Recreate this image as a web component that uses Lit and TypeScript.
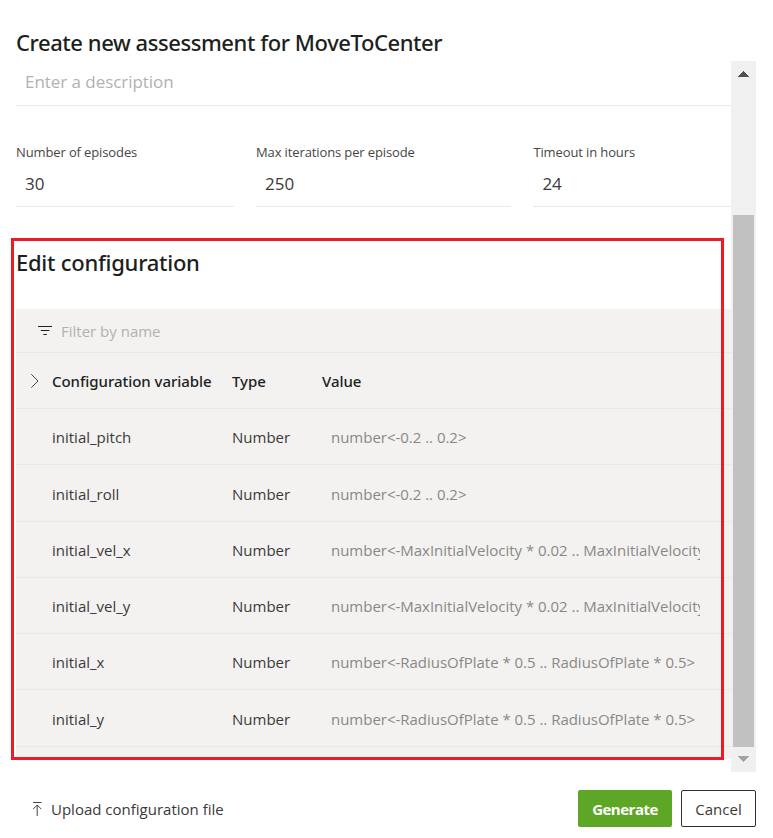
import { LitElement, html, css, svg } from "lit";
import { customElement } from "lit/decorators.js";

const PITCH = "number<-0.2 .. 0.2>";
const VELOCITY = "number<-MaxInitialVelocity * 0.02 .. MaxInitialVelocity * 0.02>";
const RADIUS = "number<-RadiusOfPlate * 0.5 .. RadiusOfPlate * 0.5>";

const ROWS: [string, string, string][] = [
  ["initial_pitch", "Number", PITCH],
  ["initial_roll", "Number", PITCH],
  ["initial_vel_x", "Number", VELOCITY],
  ["initial_vel_y", "Number", VELOCITY],
  ["initial_x", "Number", RADIUS],
  ["initial_y", "Number", RADIUS],
];

const FIELDS: [string, string][] = [
  ["Number of episodes", "30"],
  ["Max iterations per episode", "250"],
  ["Timeout in hours", "24"],
];

@customElement("config-table")
export class ConfigTable extends LitElement {
  static styles = css`
    :host {
      display: block;
      background: #f3f2f1;
      font-size: 15px;
      color: #3b3a39;
      height: 450px;
      overflow: hidden;
    }
    .filter,
    .row {
      box-sizing: border-box;
      border-bottom: 1px solid #eae9e8;
      align-items: center;
    }
    .filter {
      display: flex;
      height: 44px;
      padding-left: 21px;
      gap: 8px;
      color: #b3b1af;
      line-height: 20px;
      padding-top: 1px;
    }
    .row {
      display: grid;
      grid-template-columns: 36px 180px 90px 378px;
      height: 56.25px;
      line-height: 20px;
      padding-top: 1.6px;
    }
    .head {
      height: 56px;
      padding-top: 0;
      font-family: "Noto Sans", sans-serif;
      font-weight: 500;
      letter-spacing: -0.04px;
      color: #201f1e;
    }
    .value {
      margin-left: 9px;
      color: #8a8886;
      letter-spacing: -0.02px;
      white-space: nowrap;
      overflow: hidden;
    }
    .chevron {
      margin-left: 14px;
    }
    svg {
      display: block;
    }
  `;

  render() {
    return html`
      <div class="filter">
        <svg width="16" height="16" viewBox="0 0 16 16" fill="none" stroke="#201f1e" stroke-width="1.2">
          <path d="M1 3.5h14M3.8 7.5h8.6M6.3 11.5h3.5" />
        </svg>
        <span>Filter by name</span>
      </div>
      <div class="row head">
        <svg class="chevron" width="10" height="16" viewBox="0 0 10 16" fill="none" stroke="#484644" stroke-width="1">
          <path d="M1.3 1.3L8 8l-6.7 6.7" />
        </svg>
        <span>Configuration variable</span><span>Type</span><span>Value</span>
      </div>
      ${ROWS.map(
        ([name, type, value]) => html`
          <div class="row"><span></span><span>${name}</span><span>${type}</span><span class="value">${value}</span></div>
        `
      )}
    `;
  }
}

@customElement("app-root")
export class AppRoot extends LitElement {
  static styles = css`
    :host {
      display: flex;
      flex-direction: column;
      position: relative;
      box-sizing: border-box;
      width: 773px;
      height: 838px;
      padding-left: 16px;
      background: #fff;
      color: #3b3a39;
      font-family: "Open Sans", "Noto Sans", sans-serif;
      overflow: hidden;
    }
    h1,
    h2 {
      margin: 0;
      font: 500 22px/30px "Noto Sans", sans-serif;
      color: #201f1e;
      white-space: nowrap;
    }
    h1 {
      padding-top: 27px;
      height: 34px;
      letter-spacing: -0.43px;
    }
    h2 {
      margin-top: 40px;
      height: 62px;
      letter-spacing: -0.26px;
    }
    .pane {
      display: flex;
      height: 711px;
    }
    .content {
      width: 715px;
    }
    .description {
      box-sizing: border-box;
      height: 45px;
      padding: 9px 9px 0;
      border-bottom: 1px solid #e9e9e9;
      font-size: 17px;
      line-height: 24px;
      letter-spacing: -0.05px;
      color: #b3b1af;
    }
    .fields {
      display: grid;
      grid-template-columns: 218px 255.4px 197.6px;
      column-gap: 22px;
      margin-top: 36px;
    }
    .label {
      font-size: 13px;
      line-height: 20px;
      letter-spacing: -0.12px;
      color: #484644;
    }
    .input {
      box-sizing: border-box;
      height: 45px;
      padding: 10px 9px 0;
      border-bottom: 1px solid #e9e9e9;
      font-size: 17px;
      line-height: 24px;
    }
    .scrollbar {
      display: flex;
      flex-direction: column;
      width: 25px;
      background: #f0f0f0;
    }
    .arrow {
      display: block;
      height: 25px;
      width: 25px;
    }
    .thumb {
      width: 21px;
      height: 532px;
      margin: 129px 2px 0;
      background: #c1c1c1;
    }
    .footer {
      display: flex;
      align-items: center;
      margin-top: 18px;
      height: 37px;
      font-size: 15px;
    }
    .upload {
      display: flex;
      align-items: center;
      gap: 7px;
      padding-left: 15px;
      flex: 1;
      line-height: 20px;
    }
    .upload svg {
      display: block;
    }
    .button {
      box-sizing: border-box;
      height: 37px;
      border-radius: 2px;
      line-height: 37px;
      padding-top: 1px;
      text-align: center;
    }
    .primary {
      width: 94px;
      margin-right: 9px;
      background: #5ea626;
      color: #fff;
      font-weight: 700;
      letter-spacing: -0.5px;
    }
    .secondary {
      width: 75px;
      margin-right: 17px;
      border: 1px solid #323130;
      line-height: 35px;
    }
    .highlight {
      position: absolute;
      box-sizing: border-box;
      left: 11px;
      top: 238px;
      width: 713px;
      height: 522px;
      border: 3px solid #ed1c24;
    }
  `;

  private arrow(d: string, fill: string) {
    return html`<svg class="arrow" viewBox="0 0 25 25" shape-rendering="crispEdges">${svg`<path d=${d} fill=${fill} />`}</svg>`;
  }

  render() {
    return html`
      <h1>Create new assessment for MoveToCenter</h1>
      <div class="pane">
        <div class="content">
          <div class="description">Enter a description</div>
          <div class="fields">
            ${FIELDS.map(
              ([label, value]) => html`<div><div class="label">${label}</div><div class="input">${value}</div></div>`
            )}
          </div>
          <h2>Edit configuration</h2>
          <config-table></config-table>
        </div>
        <div class="scrollbar">
          ${this.arrow("M6.5 16L12.5 10L18.5 16Z", "#505050")}
          <div class="thumb"></div>
          ${this.arrow("M6.5 9L12.5 15L18.5 9Z", "#a3a3a3")}
        </div>
      </div>
      <div class="footer">
        <div class="upload">
          <svg width="13" height="16" viewBox="0 0 13 16" fill="none" stroke="#484644" stroke-width="1">
            <path d="M2 1.5h8.5M6.2 15V4M2.2 8L6.2 4l4 4" />
          </svg>
          <span>Upload configuration file</span>
        </div>
        <div class="button primary">Generate</div>
        <div class="button secondary">Cancel</div>
      </div>
      <div class="highlight"></div>
    `;
  }
}
